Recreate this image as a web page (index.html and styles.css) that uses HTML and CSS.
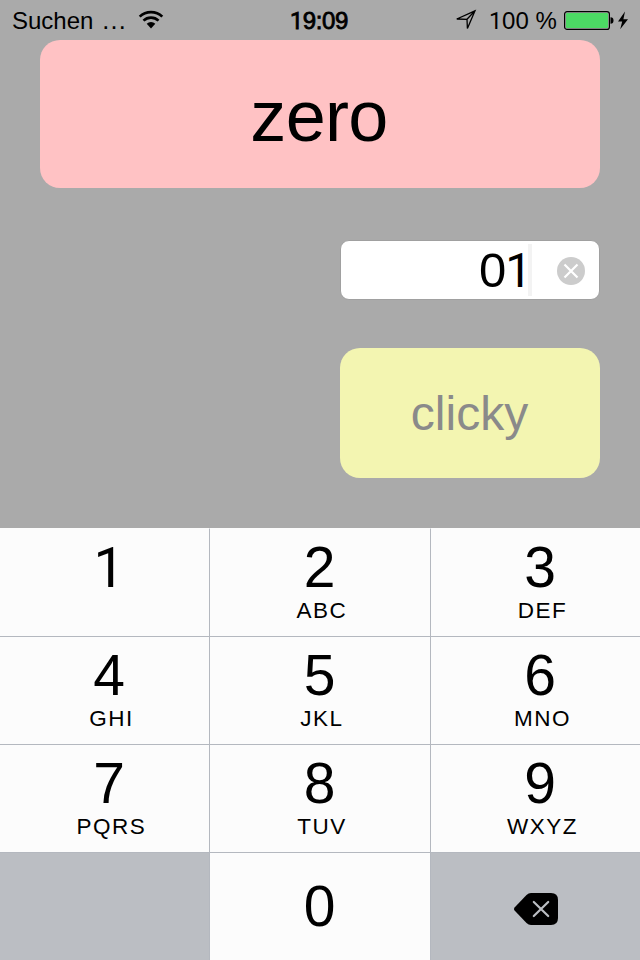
FILE: index.html
```html
<!DOCTYPE html>
<html lang="de">
<head>
<meta charset="utf-8">
<title>zero</title>
<link rel="stylesheet" href="styles.css">
</head>
<body>
<div class="phone">
  <header class="status">
    <div class="carrier">
      <span class="carrier-name">Suchen <span class="dots">…</span></span>
      <svg class="wifi" width="26" height="20" viewBox="0 0 26 20">
        <g fill="none" stroke="#000" stroke-width="2.7">
          <path d="M1.7 6.6A16.3 16.3 0 0 1 24.3 6.6"/>
          <path d="M5.5 10.6A10.8 10.8 0 0 1 20.5 10.6"/>
        </g>
        <path d="M8.7 13.8A6.1 6.1 0 0 1 17.3 13.8L13 18.6Z"/>
      </svg>
    </div>
    <div class="time"><span class="one">1</span>9:09</div>
    <div class="power">
      <svg class="arrow" width="22" height="22" viewBox="0 0 22 22">
        <path d="M1.8 10L20 1.8L12.4 19.4L12 10.3Z M12 10.3L20 1.8" fill="none" stroke="#000" stroke-width="1.3"/>
      </svg>
      <span class="percent"><span class="one">1</span>00 %</span>
      <svg class="battery" width="66" height="20" viewBox="0 0 66 20">
        <rect x="0.6" y="0.6" width="44.8" height="17.8" rx="2.5" fill="none" stroke="#000" stroke-width="1.2"/>
        <rect x="2" y="2" width="42" height="15" rx="1" fill="#4cd964"/>
        <path d="M46.5 6.2A3 3.3 0 0 1 46.5 12.8Z"/>
        <path d="M61 .5L54 10.6H58.2L56.2 18.2L64 8.2H59.4Z"/>
      </svg>
    </div>
  </header>
  <main class="content">
    <div class="banner">zero</div>
    <div class="field">
      <span class="value">0<span class="one">1</span></span>
      <span class="caret"></span>
      <svg class="clear" width="28" height="28" viewBox="0 0 28 28">
        <circle cx="14" cy="14" r="14" fill="#ccc"/>
        <path d="M7.5 7.5L20.5 20.5M20.5 7.5L7.5 20.5" stroke="#fff" stroke-width="2.2"/>
      </svg>
    </div>
    <div class="button">clicky</div>
  </main>
  <div class="keypad">
    <div class="key"><div class="digit"><span class="one">1</span></div></div>
    <div class="key"><div class="digit">2</div><div class="letters">ABC</div></div>
    <div class="key"><div class="digit">3</div><div class="letters">DEF</div></div>
    <div class="key"><div class="digit">4</div><div class="letters">GHI</div></div>
    <div class="key"><div class="digit">5</div><div class="letters">JKL</div></div>
    <div class="key"><div class="digit">6</div><div class="letters">MNO</div></div>
    <div class="key"><div class="digit">7</div><div class="letters">PQRS</div></div>
    <div class="key"><div class="digit">8</div><div class="letters">TUV</div></div>
    <div class="key"><div class="digit">9</div><div class="letters">WXYZ</div></div>
    <div class="key dark"></div>
    <div class="key zero"><div class="digit">0</div></div>
    <div class="key dark">
      <svg class="delete" width="44" height="32" viewBox="0 0 44 32">
        <path d="M17 0H37Q44 0 44 7V25Q44 32 37 32H17Q14.5 32 12.5 30L.8 17.8Q-.8 16 .8 14.2L12.5 2Q14.5 0 17 0Z"/>
        <path d="M19.8 9L34.2 23M34.2 9L19.8 23" stroke="#bbbec3" stroke-width="2.2" stroke-linecap="round"/>
      </svg>
    </div>
  </div>
</div>
</body>
</html>
```

FILE: styles.css
```css
* { box-sizing: border-box; }
body {
  margin: 0;
  background: #aaa;
  color: #000;
  font-family: "Liberation Sans", Arial, sans-serif;
}
svg { display: block; flex: none; }
.phone {
  width: 640px;
  height: 960px;
  display: flex;
  flex-direction: column;
  overflow: hidden;
}
.one { font-family: Roboto, sans-serif; font-size: .97em; line-height: 0; }

.status {
  height: 40px;
  display: grid;
  grid-template-columns: 1fr 80px 1fr;
  font-size: 24px;
  line-height: 42px;
  white-space: nowrap;
}
.carrier { display: flex; padding-left: 12px; }
.carrier-name { width: 126px; }
.dots { font-size: 26px; line-height: 0; margin-left: 1px; }
.wifi { margin-top: 10px; }
.time {
  padding-right: 2px;
  text-align: center;
  letter-spacing: -.4px;
  -webkit-text-stroke: .8px #000;
}
.power { display: flex; justify-content: flex-end; padding-right: 10px; }
.arrow { margin: 9px 12px 0 0; }
.percent { width: 75px; }
.battery { margin-top: 11px; }

.content {
  height: 488px;
  padding: 0 40px;
  display: flex;
  flex-direction: column;
  align-items: flex-end;
}
.banner {
  width: 560px;
  height: 148px;
  padding: 2px 2px 0 0;
  border-radius: 20px;
  background: #ffc2c4;
  font-size: 72px;
  line-height: 148px;
  letter-spacing: -.7px;
  text-align: center;
}
.field {
  width: 260px;
  height: 60px;
  margin: 52px 0 48px;
  padding-right: 14px;
  display: flex;
  justify-content: flex-end;
  align-items: center;
  border: 1px solid #a0a0a0;
  border-radius: 9px;
  background: #fff;
}
.value { font-size: 49px; line-height: 54px; padding-bottom: 1px; margin-right: -3px; letter-spacing: -1px; }
.caret { width: 4px; height: 52px; background: #f3f3f3; }
.clear { margin: 2px 0 0 25px; }
.button {
  width: 260px;
  height: 130px;
  padding-right: 1px;
  border-radius: 20px;
  background: #f3f5b1;
  color: #8a8a8a;
  font-size: 48px;
  line-height: 131px;
  text-align: center;
}

.keypad {
  display: grid;
  grid-template-columns: 209px 222px 209px;
  grid-auto-rows: 108px;
  background: #fcfcfc;
}
.key { padding-top: 17px; text-align: center; border-top: 1px solid #b4b8bf; }
.key:nth-child(-n+3) { border-top-color: #fcfcfc; }
.key:nth-child(3n+1) { padding-left: 9px; }
.key:nth-child(3n+2) { padding-right: 1px; border-left: 1px solid #b4b8bf; border-right: 1px solid #b4b8bf; }
.key:nth-child(3n) { padding-left: 9px; }
.digit { font-size: 57px; line-height: 43px; }
.letters { font-size: 22.5px; line-height: 43px; letter-spacing: 1.5px; padding-left: 5px; }
.key.zero { padding-top: 32px; }
.key.dark { background: #bbbec3; }
.delete { margin: 23px 0 0 74px; }
```
